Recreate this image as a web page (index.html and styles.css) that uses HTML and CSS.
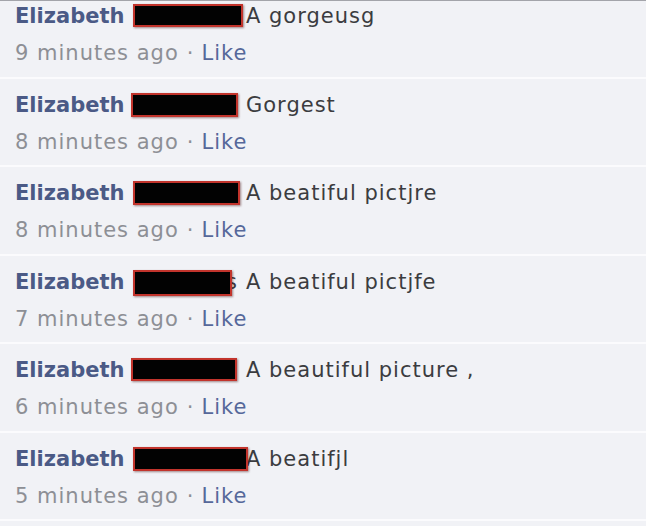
FILE: index.html
```html
<!DOCTYPE html>
<html>
<head>
<meta charset="utf-8">
<link rel="stylesheet" href="styles.css">
</head>
<body>
<div class="feed">
  <ul class="comments">
    <li class="comment">
      <div class="line1"><span class="name">Elizabeth</span><span class="msg">A gorgeusg</span><span class="redact r1"></span></div>
      <div class="line2"><span class="time">9 minutes ago</span><span class="dot">·</span><a class="like">Like</a></div>
    </li>
    <li class="comment">
      <div class="line1"><span class="name">Elizabeth</span><span class="msg">Gorgest</span><span class="redact r2"></span></div>
      <div class="line2"><span class="time">8 minutes ago</span><span class="dot">·</span><a class="like">Like</a></div>
    </li>
    <li class="comment">
      <div class="line1"><span class="name">Elizabeth</span><span class="msg">A beatiful pictjre</span><span class="redact r3"></span></div>
      <div class="line2"><span class="time">8 minutes ago</span><span class="dot">·</span><a class="like">Like</a></div>
    </li>
    <li class="comment">
      <div class="line1"><span class="name">Elizabeth</span><span class="msg">A beatiful pictjfe</span><span class="leftover">s</span><span class="redact r4"></span></div>
      <div class="line2"><span class="time">7 minutes ago</span><span class="dot">·</span><a class="like">Like</a></div>
    </li>
    <li class="comment">
      <div class="line1"><span class="name">Elizabeth</span><span class="msg">A beautiful picture ,</span><span class="redact r5"></span></div>
      <div class="line2"><span class="time">6 minutes ago</span><span class="dot">·</span><a class="like">Like</a></div>
    </li>
    <li class="comment">
      <div class="line1"><span class="name">Elizabeth</span><span class="msg">A beatifjl</span><span class="redact r6"></span></div>
      <div class="line2"><span class="time">5 minutes ago</span><span class="dot">·</span><a class="like">Like</a></div>
    </li>
  </ul>
</div>
</body>
</html>
```
FILE: styles.css
```css
html, body {
  margin: 0;
  padding: 0;
  background: #f1f2f6;
}
body {
  width: 646px;
  height: 526px;
  overflow: hidden;
  font-family: "DejaVu Sans", "Open Sans", sans-serif;
}
.feed {
  border-top: 1px solid #a3a4aa;
  height: 525px;
  overflow: hidden;
}
.comments {
  list-style: none;
  margin: -11px 0 0 0;
  padding: 0;
}
.comment {
  height: 88.5px;
  box-sizing: border-box;
  padding: 14px 0 0 15px;
  border-bottom: 2px solid #fbfbfd;
}
.line1, .line2 {
  height: 24px;
  line-height: 24px;
  font-size: 21px;
  white-space: nowrap;
}
.line1 {
  position: relative;
  display: grid;
  grid-template-columns: 231px auto;
  justify-content: start;
}
.line2 {
  display: flex;
  align-items: center;
  margin-top: 13px;
  letter-spacing: 1px;
}
.name {
  font-weight: bold;
  color: #4b5a86;
}
.msg {
  color: #3b3c40;
  letter-spacing: 1px;
}
.redact {
  position: absolute;
  top: 0;
  height: 24px;
  box-sizing: border-box;
  background: #020202;
  border: 2px solid #c2342c;
  box-shadow: 1px 1px 2px rgba(60, 0, 0, 0.45);
}
.r1 { left: 118px; width: 110px; height: 23px; }
.r2 { left: 116px; width: 107px; }
.r3 { left: 118px; width: 107px; }
.r4 { left: 118px; width: 99px; height: 26px; }
.r5 { left: 116px; width: 106px; height: 23px; }
.r6 { left: 118px; width: 115px; height: 24px; }
.leftover {
  position: absolute;
  left: 211px;
  top: 0;
  color: #3b3c40;
}
.time {
  color: #8d8f95;
}
.dot {
  color: #8d8f95;
  margin: 0 7px 0 8px;
}
.like {
  color: #56689a;
}
```
